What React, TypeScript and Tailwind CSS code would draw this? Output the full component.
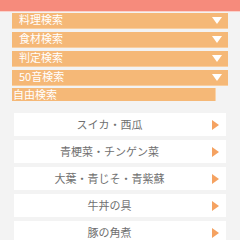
import React from 'react';

const searchMenus = ['料理検索', '食材検索', '判定検索', '50音検索'];

const items = ['スイカ・西瓜', '青梗菜・チンゲン菜', '大葉・青じそ・青紫蘇', '牛丼の具', '豚の角煮'];

function DownTriangle() {
  return (
    <svg width="10" height="7" viewBox="0 0 10 7" className="shrink-0">
      <path d="M0 0 H10 L5 7 Z" fill="#ffffff" />
    </svg>
  );
}

function RightTriangle() {
  return (
    <svg width="7" height="10" viewBox="0 0 7 10" className="shrink-0">
      <path d="M0 0 L7 5 L0 10 Z" fill="#f5a261" />
    </svg>
  );
}

export default function App() {
  return (
    <div
      className="w-[240px] h-[240px] overflow-hidden bg-[#f3f3f3] flex flex-col"
      style={{ fontFamily: '"Noto Sans CJK JP", "Noto Sans", sans-serif' }}
    >
      <div className="h-[11px] bg-[#f68b7c] shrink-0" />
      <div className="h-[1px] bg-[#fad2cb] shrink-0" />

      <div className="flex flex-col gap-[3px] px-[12px] pt-[1px]">
        {searchMenus.map((label) => (
          <div
            key={label}
            className="h-[16px] flex items-start justify-between bg-[#f5b877] border-b border-[#f8cea0] pl-[7px] pr-[6px]"
          >
            <span className="text-[11px] leading-[13px] text-white">{label}</span>
            <div className="self-center">
              <DownTriangle />
            </div>
          </div>
        ))}
        <div className="w-[204px] h-[13px] flex items-center bg-[#f5b877] border-r border-[#f9d3aa] pl-[1px] -mt-[1px]">
          <span className="text-[11px] leading-[13px] text-white">自由検索</span>
        </div>
      </div>

      <div className="flex flex-col gap-[4px] px-[14px] pt-[12px]">
        {items.map((name) => (
          <div key={name} className="h-[23px] shrink-0 flex items-center bg-white pr-[7px]">
            <span className="flex-1 text-center text-[11px] leading-[13px] text-[#707070] pr-[7px]">
              {name}
            </span>
            <RightTriangle />
          </div>
        ))}
      </div>
    </div>
  );
}
